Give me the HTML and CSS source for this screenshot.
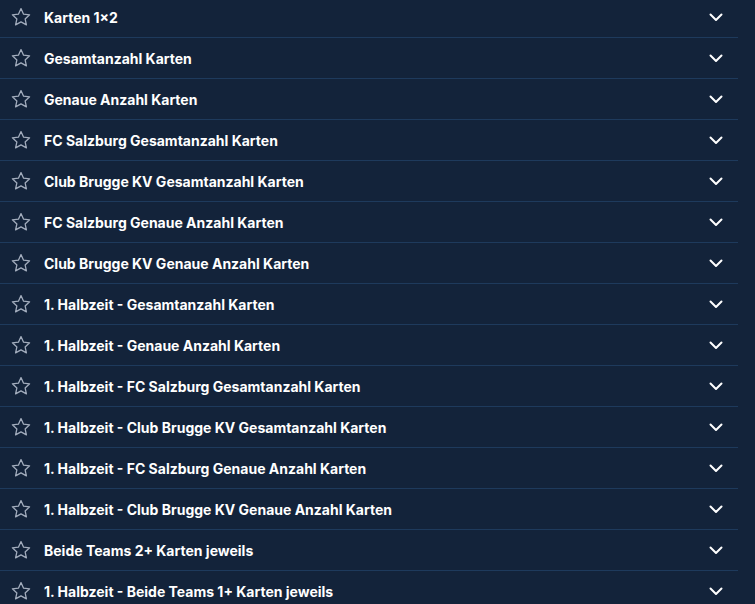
FILE: index.html
```html
<!DOCTYPE html>
<html lang="de">
<head>
  <meta charset="UTF-8" />
  <title>Karten Märkte</title>
  <link rel="stylesheet" href="styles.css">
</head>
<body>
<ul class="markets">
  <li class="market"><span class="star"><svg viewBox="0 0 24 24"><path d="M12 2.8l2.8 6.1 6.6.7-4.9 4.5 1.4 6.5L12 17.3l-5.9 3.3 1.4-6.5-4.9-4.5 6.6-.7z"/></svg></span><span class="title">Karten 1×2</span><span class="chev"><svg viewBox="0 0 14 9"><path d="M1.5 1.5l5.5 5.5 5.5-5.5"/></svg></span></li>
  <li class="market"><span class="star"><svg viewBox="0 0 24 24"><path d="M12 2.8l2.8 6.1 6.6.7-4.9 4.5 1.4 6.5L12 17.3l-5.9 3.3 1.4-6.5-4.9-4.5 6.6-.7z"/></svg></span><span class="title">Gesamtanzahl Karten</span><span class="chev"><svg viewBox="0 0 14 9"><path d="M1.5 1.5l5.5 5.5 5.5-5.5"/></svg></span></li>
  <li class="market"><span class="star"><svg viewBox="0 0 24 24"><path d="M12 2.8l2.8 6.1 6.6.7-4.9 4.5 1.4 6.5L12 17.3l-5.9 3.3 1.4-6.5-4.9-4.5 6.6-.7z"/></svg></span><span class="title">Genaue Anzahl Karten</span><span class="chev"><svg viewBox="0 0 14 9"><path d="M1.5 1.5l5.5 5.5 5.5-5.5"/></svg></span></li>
  <li class="market"><span class="star"><svg viewBox="0 0 24 24"><path d="M12 2.8l2.8 6.1 6.6.7-4.9 4.5 1.4 6.5L12 17.3l-5.9 3.3 1.4-6.5-4.9-4.5 6.6-.7z"/></svg></span><span class="title">FC Salzburg Gesamtanzahl Karten</span><span class="chev"><svg viewBox="0 0 14 9"><path d="M1.5 1.5l5.5 5.5 5.5-5.5"/></svg></span></li>
  <li class="market"><span class="star"><svg viewBox="0 0 24 24"><path d="M12 2.8l2.8 6.1 6.6.7-4.9 4.5 1.4 6.5L12 17.3l-5.9 3.3 1.4-6.5-4.9-4.5 6.6-.7z"/></svg></span><span class="title">Club Brugge KV Gesamtanzahl Karten</span><span class="chev"><svg viewBox="0 0 14 9"><path d="M1.5 1.5l5.5 5.5 5.5-5.5"/></svg></span></li>
  <li class="market"><span class="star"><svg viewBox="0 0 24 24"><path d="M12 2.8l2.8 6.1 6.6.7-4.9 4.5 1.4 6.5L12 17.3l-5.9 3.3 1.4-6.5-4.9-4.5 6.6-.7z"/></svg></span><span class="title">FC Salzburg Genaue Anzahl Karten</span><span class="chev"><svg viewBox="0 0 14 9"><path d="M1.5 1.5l5.5 5.5 5.5-5.5"/></svg></span></li>
  <li class="market"><span class="star"><svg viewBox="0 0 24 24"><path d="M12 2.8l2.8 6.1 6.6.7-4.9 4.5 1.4 6.5L12 17.3l-5.9 3.3 1.4-6.5-4.9-4.5 6.6-.7z"/></svg></span><span class="title">Club Brugge KV Genaue Anzahl Karten</span><span class="chev"><svg viewBox="0 0 14 9"><path d="M1.5 1.5l5.5 5.5 5.5-5.5"/></svg></span></li>
  <li class="market"><span class="star"><svg viewBox="0 0 24 24"><path d="M12 2.8l2.8 6.1 6.6.7-4.9 4.5 1.4 6.5L12 17.3l-5.9 3.3 1.4-6.5-4.9-4.5 6.6-.7z"/></svg></span><span class="title">1. Halbzeit - Gesamtanzahl Karten</span><span class="chev"><svg viewBox="0 0 14 9"><path d="M1.5 1.5l5.5 5.5 5.5-5.5"/></svg></span></li>
  <li class="market"><span class="star"><svg viewBox="0 0 24 24"><path d="M12 2.8l2.8 6.1 6.6.7-4.9 4.5 1.4 6.5L12 17.3l-5.9 3.3 1.4-6.5-4.9-4.5 6.6-.7z"/></svg></span><span class="title">1. Halbzeit - Genaue Anzahl Karten</span><span class="chev"><svg viewBox="0 0 14 9"><path d="M1.5 1.5l5.5 5.5 5.5-5.5"/></svg></span></li>
  <li class="market"><span class="star"><svg viewBox="0 0 24 24"><path d="M12 2.8l2.8 6.1 6.6.7-4.9 4.5 1.4 6.5L12 17.3l-5.9 3.3 1.4-6.5-4.9-4.5 6.6-.7z"/></svg></span><span class="title">1. Halbzeit - FC Salzburg Gesamtanzahl Karten</span><span class="chev"><svg viewBox="0 0 14 9"><path d="M1.5 1.5l5.5 5.5 5.5-5.5"/></svg></span></li>
  <li class="market"><span class="star"><svg viewBox="0 0 24 24"><path d="M12 2.8l2.8 6.1 6.6.7-4.9 4.5 1.4 6.5L12 17.3l-5.9 3.3 1.4-6.5-4.9-4.5 6.6-.7z"/></svg></span><span class="title">1. Halbzeit - Club Brugge KV Gesamtanzahl Karten</span><span class="chev"><svg viewBox="0 0 14 9"><path d="M1.5 1.5l5.5 5.5 5.5-5.5"/></svg></span></li>
  <li class="market"><span class="star"><svg viewBox="0 0 24 24"><path d="M12 2.8l2.8 6.1 6.6.7-4.9 4.5 1.4 6.5L12 17.3l-5.9 3.3 1.4-6.5-4.9-4.5 6.6-.7z"/></svg></span><span class="title">1. Halbzeit - FC Salzburg Genaue Anzahl Karten</span><span class="chev"><svg viewBox="0 0 14 9"><path d="M1.5 1.5l5.5 5.5 5.5-5.5"/></svg></span></li>
  <li class="market"><span class="star"><svg viewBox="0 0 24 24"><path d="M12 2.8l2.8 6.1 6.6.7-4.9 4.5 1.4 6.5L12 17.3l-5.9 3.3 1.4-6.5-4.9-4.5 6.6-.7z"/></svg></span><span class="title">1. Halbzeit - Club Brugge KV Genaue Anzahl Karten</span><span class="chev"><svg viewBox="0 0 14 9"><path d="M1.5 1.5l5.5 5.5 5.5-5.5"/></svg></span></li>
  <li class="market"><span class="star"><svg viewBox="0 0 24 24"><path d="M12 2.8l2.8 6.1 6.6.7-4.9 4.5 1.4 6.5L12 17.3l-5.9 3.3 1.4-6.5-4.9-4.5 6.6-.7z"/></svg></span><span class="title">Beide Teams 2+ Karten jeweils</span><span class="chev"><svg viewBox="0 0 14 9"><path d="M1.5 1.5l5.5 5.5 5.5-5.5"/></svg></span></li>
  <li class="market"><span class="star"><svg viewBox="0 0 24 24"><path d="M12 2.8l2.8 6.1 6.6.7-4.9 4.5 1.4 6.5L12 17.3l-5.9 3.3 1.4-6.5-4.9-4.5 6.6-.7z"/></svg></span><span class="title">1. Halbzeit - Beide Teams 1+ Karten jeweils</span><span class="chev"><svg viewBox="0 0 14 9"><path d="M1.5 1.5l5.5 5.5 5.5-5.5"/></svg></span></li>
</ul>
</body>
</html>
```
FILE: styles.css
```css
* {
  box-sizing: border-box;
}
html, body {
  margin: 0;
  background: #13233a;
  overflow: hidden;
}
body {
  font-family: Inter, 'Noto Sans', sans-serif;
  color: #fff;
}

.markets {
  list-style: none;
  margin: -3px 0 0 0;
  padding: 0;
  width: 738px;
}

.market {
  display: flex;
  align-items: center;
  height: 41px;
  border-bottom: 1px solid #1e3a5c;
}

.star {
  width: 44px;
  padding-left: 10px;
  display: flex;
  align-items: center;
}
.star svg {
  width: 22px;
  height: 22px;
  fill: none;
  stroke: #a3adbd;
  stroke-width: 1.4;
  stroke-linejoin: round;
}

.title {
  flex: 1;
  font-size: 14px;
  font-weight: 700;
  white-space: nowrap;
}

.chev {
  width: 40px;
  display: flex;
  justify-content: center;
  padding-right: 4px;
}
.chev svg {
  width: 14px;
  height: 9px;
  fill: none;
  stroke: #fff;
  stroke-width: 2;
  stroke-linecap: round;
  stroke-linejoin: round;
}
```
